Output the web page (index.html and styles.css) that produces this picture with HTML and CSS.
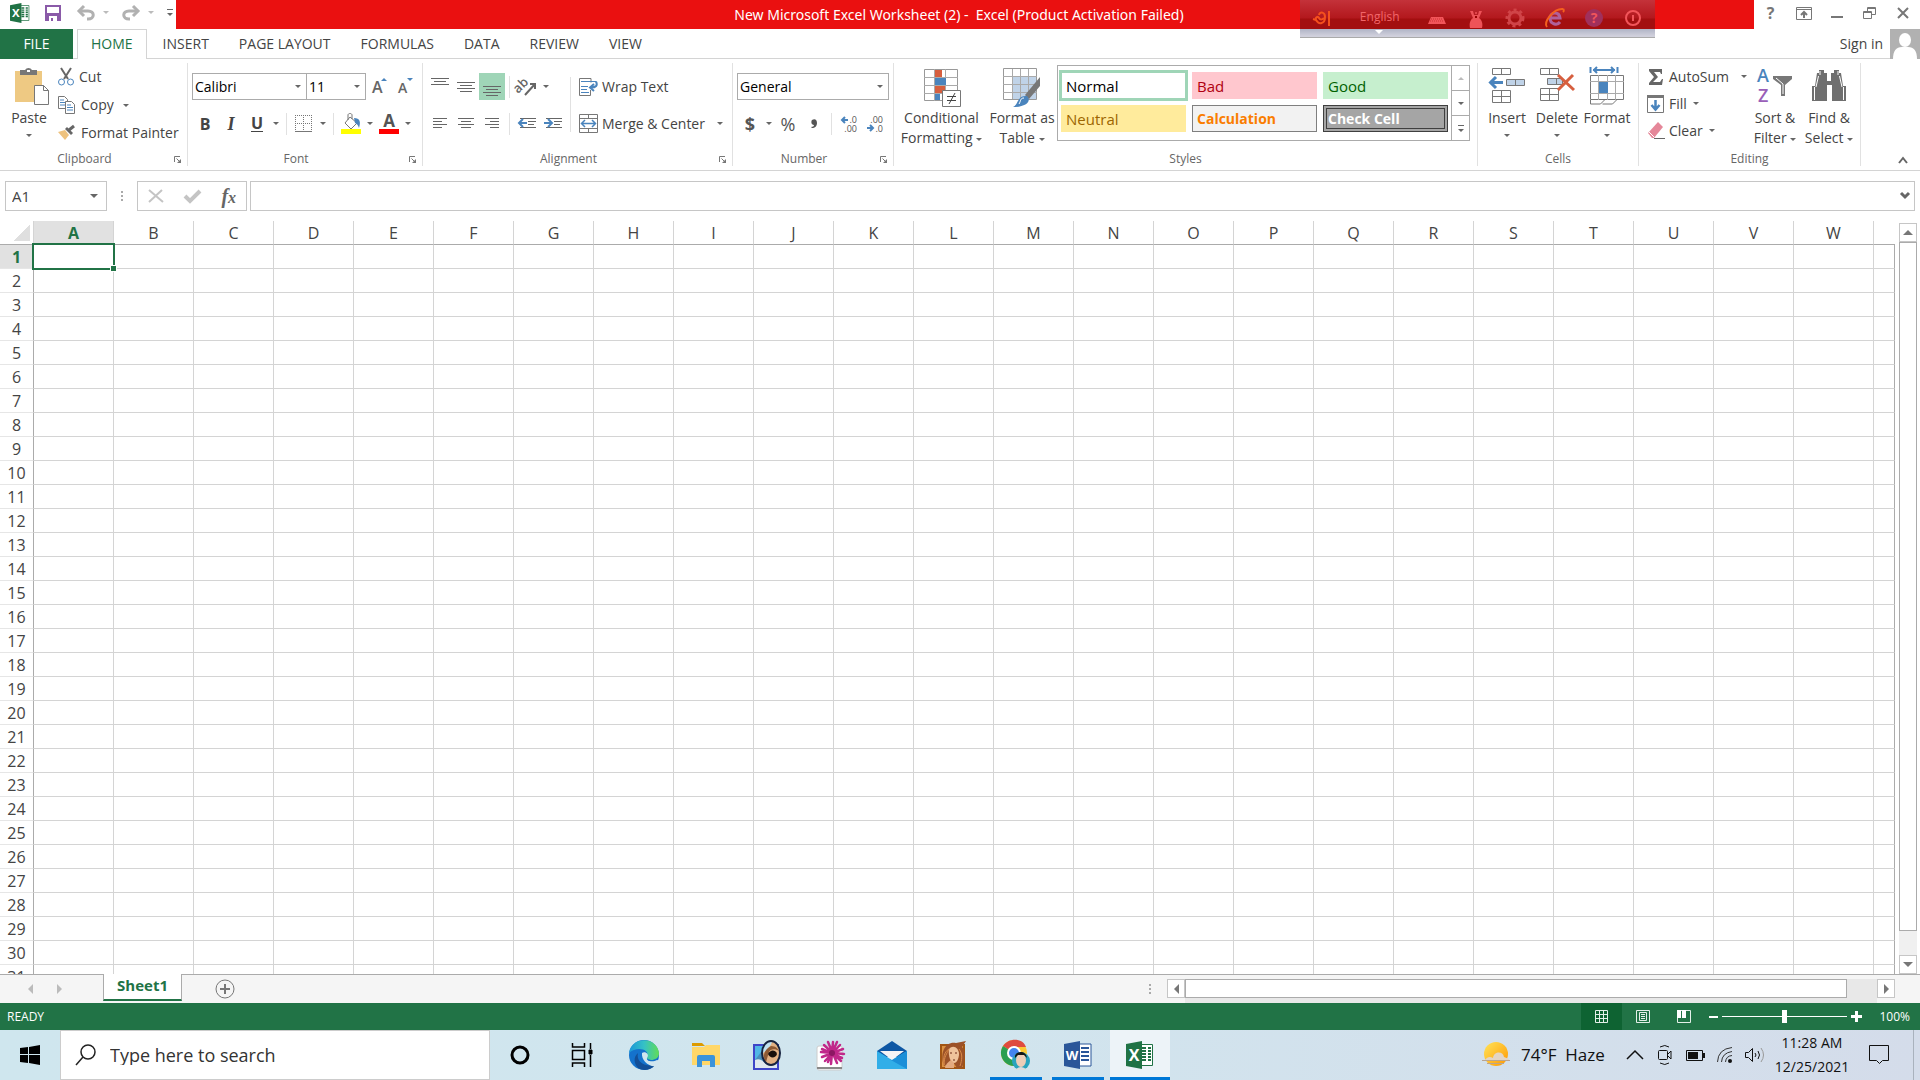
FILE: index.html
```html
<!DOCTYPE html>
<html lang="en">
<head>
  <meta charset="UTF-8" />
  <meta name="viewport" content="width=device-width, initial-scale=1.0" />
  <title>New Microsoft Excel Worksheet (2) - Excel</title>
  <link rel="stylesheet" href="styles.css">
</head>
<body>
  <header class="titlebar">
    <div class="quick-access">
      <svg class="excel-logo" width="20" height="20" viewBox="0 0 28 28"><use href="#excel"/></svg>
      <button class="qa-save" aria-label="Save"><svg width="16" height="16" viewBox="0 0 16 16"><path d="M0 0h16v16H0z" fill="#8a5aa8"/><path d="M2 2h12v6H2z" fill="#fff"/><path d="M4 11h8v5H4z" fill="#fff"/><path d="M6 13h2v3H6z" fill="#8a5aa8"/></svg></button>
      <button class="qa-undo" aria-label="Undo"><svg width="18" height="16" viewBox="0 0 18 16" fill="none" stroke="#b1b1b1" stroke-width="3"><path d="M2 6h9c7 0 7 8 0 8h-1"/><path d="M7 1L2 6l5 5"/></svg><i class="caret light"></i></button>
      <button class="qa-undo" aria-label="Redo"><svg width="18" height="16" viewBox="0 0 18 16" fill="none" stroke="#b1b1b1" stroke-width="3"><path d="M16 6H7C0 6 0 14 7 14h1"/><path d="M11 1l5 5-5 5"/></svg><i class="caret light"></i></button>
      <button class="qa-more" aria-label="Customize Quick Access Toolbar"><i class="caret bar"></i></button>
    </div>
    <h1 class="title">New Microsoft Excel Worksheet (2) -&nbsp; Excel (Product Activation Failed)</h1>
    <div class="window-buttons">
      <button aria-label="Help"><b>?</b></button>
      <button aria-label="Ribbon Display Options"><svg width="16" height="13" viewBox="0 0 16 13" fill="none" stroke="#777"><path d="M.5.5h15v12H.5zM.5 2.500h15" /><path d="M8 11V5M5 8l3-3 3 3" stroke-width="2"/></svg></button>
      <button aria-label="Minimize"><svg width="12" height="13"><path d="M0 9h12v2H0z" fill="#777"/></svg></button>
      <button aria-label="Restore"><svg width="13" height="12" viewBox="0 0 13 12" fill="none" stroke="#777"><path d="M.5 4.500h8v7h-8zM.5 5.500h8M4.500 4V.5h8v7H9M4.500 1.500h8"/></svg></button>
      <button aria-label="Close"><svg width="12" height="12" viewBox="0 0 12 12" stroke="#777" stroke-width="2"><path d="M1 1l10 10M11 1L1 11"/></svg></button>
    </div>
    <div class="language-bar">
      <svg width="20" height="20" viewBox="0 0 20 20" fill="none" stroke="#f4501e" stroke-width="2"><path d="M7 7c1-4 6-3 6 2 0 7-6 8-9 3-1-3 2-4 3-2s3 2 5 0M17 3v15M1 11l3 1"/></svg>
      <span class="language-name">English<i></i></span>
      <svg width="20" height="20" viewBox="0 0 20 20"><path d="M4 9h12l3 7H1z" fill="#f2555a"/><path d="M4 11h12M3 13h14" stroke="#c33" stroke-dasharray="1 1"/></svg>
      <svg width="20" height="20" viewBox="0 0 20 20" fill="#ee5358"><path d="M4 3h3l1 4h4l1-4h3l-3 7c3 2 4 6 3 10H4c-1-4 0-8 3-10z"/><circle cx="10" cy="5" r="1"/><path d="M9 8h2v2H9z" fill="#900"/></svg>
      <svg width="20" height="20" viewBox="0 0 20 20" fill="none" stroke="#d04448"><circle cx="10" cy="10" r="6" stroke-width="3"/><circle cx="10" cy="10" r="8" stroke-width="3" stroke-dasharray="3 3"/></svg>
      <svg width="22" height="20" viewBox="0 0 22 20" fill="none"><path d="M16 14c-3 4-10 2-10-4s9-7 10 0H7" stroke="#b0609a" stroke-width="3"/><path d="M3 19C-1 14 10 0 19 1c1 0 1 2 0 3" stroke="#f4601e" stroke-width="2"/></svg>
      <svg width="20" height="20" viewBox="0 0 20 20"><circle cx="10" cy="10" r="9" fill="#a0305c"/><text x="10" y="15" text-anchor="middle" font-size="14" font-weight="700" fill="#f0555a">?</text></svg>
      <svg width="20" height="20" viewBox="0 0 20 20" fill="none" stroke="#f2555a" stroke-width="2"><circle cx="10" cy="10" r="7"/><path d="M10 7v6"/></svg>
    </div>
  </header>

  <nav class="tabs">
    <button class="tab-file">FILE</button>
    <button class="tab active">HOME</button>
    <button class="tab">INSERT</button>
    <button class="tab">PAGE LAYOUT</button>
    <button class="tab">FORMULAS</button>
    <button class="tab">DATA</button>
    <button class="tab">REVIEW</button>
    <button class="tab">VIEW</button>
    <a class="sign-in" href="#">Sign in <svg width="30" height="30" viewBox="0 0 30 30"><path d="M0 0h30v30H0z" fill="#b1b1b1"/><ellipse cx="15" cy="11" rx="6" ry="7" fill="#fff"/><path d="M3 30c0-8 3-12 9-12h6c6 0 9 4 9 12z" fill="#fff"/></svg></a>
  </nav>

  <section class="ribbon">
    <div class="group clipboard">
      <div class="group-body">
        <button class="big paste">
          <svg width="36" height="40" viewBox="0 0 36 40"><path d="M1 4h27v31H1z" fill="#eec983"/><path d="M6 3h5a4 4 0 0 1 7 0h5v5H6z" fill="#777"/><path d="M13 3h3v2h-3z" fill="#fff"/><path d="M20.500 18.500h9l5 5v14h-14z" fill="#fff" stroke="#777"/><path d="M29.500 18.500v5h5" fill="none" stroke="#777"/></svg>
          <span>Paste</span><i class="caret"></i>
        </button>
        <div class="stack">
          <button class="small"><svg width="16" height="18" viewBox="0 0 16 18" fill="none"><path d="M3 0l7 11M13 0L6 11" stroke="#666" stroke-width="2"/><circle cx="3.500" cy="14" r="3" stroke="#4a84bd"/><circle cx="12.500" cy="14" r="3" stroke="#4a84bd"/></svg>Cut</button>
          <button class="small"><svg width="18" height="18" viewBox="0 0 18 18" fill="#fff" stroke="#777"><path d="M.5.500h6l3 3v9h-9z"/><path d="M2 4h4M2 6.500h5M2 9h5" stroke="#4a84bd"/><path d="M7.500 5.500h6l3 3v9h-9z"/><path d="M9 9h4M9 11.500h6M9 14h6" stroke="#4a84bd"/></svg>Copy<i class="caret"></i></button>
          <button class="small"><svg width="18" height="16" viewBox="0 0 18 16"><path d="M0 7l7-2 4 5-4 5z" fill="#eec27e"/><path d="M7 4l2-2 6 6-2 2z" fill="#666"/><path d="M11 5l5-4" stroke="#666" stroke-width="3"/></svg>Format Painter</button>
        </div>
      </div>
      <div class="group-label">Clipboard<svg class="launcher"><use href="#launcher"/></svg></div>
    </div>

    <div class="group font">
      <div class="group-body rows">
        <div class="row">
          <label class="combo font-name"><select aria-label="Font"><option>Calibri</option></select><i class="caret"></i></label>
          <label class="combo font-size"><select aria-label="Font Size"><option>11</option></select><i class="caret"></i></label>
          <button class="tool" aria-label="Increase Font Size"><svg width="15" height="18" viewBox="0 0 15 18"><text x="0" y="15" font-size="16" font-weight="600" fill="#666">A</text><path d="M9 3h6l-3-3z" fill="#4a84bd"/></svg></button>
          <button class="tool" aria-label="Decrease Font Size"><svg width="15" height="18" viewBox="0 0 15 18"><text x="0" y="15" font-size="14" font-weight="600" fill="#666">A</text><path d="M9 0h6l-3 3z" fill="#4a84bd"/></svg></button>
        </div>
        <div class="row">
          <button class="tool"><b>B</b></button>
          <button class="tool serif"><b>I</b></button>
          <button class="tool underline"><b>U</b></button>
          <button class="drop" aria-label="Underline options"><i class="caret"></i></button>
          <span class="sep"></span>
          <button class="tool" aria-label="Borders"><svg width="18" height="18" viewBox="0 0 18 18" fill="none" stroke="#777"><path d="M.5 0v16M8.500 0v16M16.500 0v16M0 .5h17M0 8.500h17" stroke-dasharray="1 1"/><path d="M0 16.500h17"/></svg></button>
          <button class="drop" aria-label="Border options"><i class="caret"></i></button>
          <span class="sep"></span>
          <button class="tool" aria-label="Fill Color"><svg width="20" height="20" viewBox="0 0 20 20"><path d="M9 3l7 6-6 6-6-6zM7 6V1c0-2 4-2 4 0v4" fill="#fff" stroke="#777"/><path d="M13 4c6 0 7 4 5 10c-1-3-2-4-4-5z" fill="#4a84bd"/><path d="M0 15h20v5H0z" fill="#ff0"/></svg></button>
          <button class="drop" aria-label="Fill color options"><i class="caret"></i></button>
          <button class="tool" aria-label="Font Color"><svg width="20" height="20" viewBox="0 0 20 20"><text x="10" y="13" text-anchor="middle" font-size="17" font-weight="700" fill="#555">A</text><path d="M0 15h20v5H0z" fill="red"/></svg></button>
          <button class="drop" aria-label="Font color options"><i class="caret"></i></button>
        </div>
      </div>
      <div class="group-label">Font<svg class="launcher"><use href="#launcher"/></svg></div>
    </div>

    <div class="group alignment">
      <div class="group-body">
        <div class="rows">
          <div class="row">
            <button class="tool" aria-label="Top Align"><svg width="18" height="26" stroke="#666"><path d="M0 4.500h18M3 7.500h12M0 10.500h18"/></svg></button>
            <button class="tool" aria-label="Middle Align"><svg width="18" height="26" stroke="#666"><path d="M0 8.500h18M3 11.500h12M0 14.500h18M3 17.500h12"/></svg></button>
            <button class="tool pressed" aria-label="Bottom Align"><svg width="18" height="26" stroke="#666"><path d="M0 12.500h18M3 15.500h12M0 18.500h18M3 21.500h12"/></svg></button>
            <span class="sep"></span>
            <button class="tool" aria-label="Orientation"><svg width="20" height="20" viewBox="0 0 20 20"><text transform="rotate(-45 6 12)" x="-1" y="12" font-size="13" font-weight="600" fill="#666">ab</text><path d="M8 18L18 7M13 7h5v5" fill="none" stroke="#666" stroke-width="2"/></svg></button>
            <button class="drop" aria-label="Orientation options"><i class="caret"></i></button>
          </div>
          <div class="row">
            <button class="tool" aria-label="Align Left"><svg width="14" height="11" stroke="#666"><path d="M0 .5h14M0 3.500h9M0 6.500h14M0 9.500h9"/></svg></button>
            <button class="tool" aria-label="Center"><svg width="16" height="11" stroke="#666"><path d="M0 .5h16M3 3.500h10M0 6.500h16M3 9.500h10"/></svg></button>
            <button class="tool" aria-label="Align Right"><svg width="14" height="11" stroke="#666"><path d="M0 .5h14M5 3.500h9M0 6.500h14M5 9.500h9"/></svg></button>
            <span class="sep"></span>
            <button class="tool" aria-label="Decrease Indent"><svg width="18" height="11" viewBox="0 0 18 11" stroke="#666" fill="none"><path d="M2 .5h16M10 3.500h8M10 6.500h6M2 9.500h16"/><path d="M9 5H1M5 1L1 5l4 4" stroke="#4a84bd" stroke-width="2"/></svg></button>
            <button class="tool" aria-label="Increase Indent"><svg width="18" height="11" viewBox="0 0 18 11" stroke="#666" fill="none"><path d="M2 .5h16M10 3.500h8M10 6.500h6M2 9.500h16"/><path d="M0 5h8M4 1l4 4-4 4" stroke="#4a84bd" stroke-width="2"/></svg></button>
          </div>
        </div>
        <div class="rows wrap-merge">
          <button class="small row"><svg width="19" height="18" viewBox="0 0 19 18" fill="none" stroke="#777"><path d="M12 .5H.5v17h11V12M12 .5v4"/><path d="M2 3.500h15M2 8.500h7M2 11.500h6M2 14.500h8" stroke="#4a84bd"/><path d="M17 3.500c2 4 0 6-5 6M15 6l-4 3.500L15 13" stroke="#4a84bd" stroke-width="2"/></svg>Wrap Text</button>
          <button class="small row"><svg width="19" height="19" viewBox="0 0 19 19" fill="none" stroke="#777"><path d="M.5.500h18v18H.5zM.5 4.500h18M.5 14.500h18M9.500 0v4M9.500 15v4"/><path d="M2 9.500h15M6 6L2.500 9.500 6 13M13 6l3.500 3.500L13 13" stroke="#4a84bd" stroke-width="1.500"/></svg>Merge &amp; Center<i class="caret"></i></button>
        </div>
      </div>
      <div class="group-label">Alignment<svg class="launcher"><use href="#launcher"/></svg></div>
    </div>

    <div class="group number">
      <div class="group-body rows">
        <div class="row">
          <label class="combo number-format"><select aria-label="Number Format"><option>General</option></select><i class="caret"></i></label>
        </div>
        <div class="row">
          <button class="tool sign"><b>$</b></button>
          <button class="drop" aria-label="Accounting options"><i class="caret"></i></button>
          <button class="tool sign">%</button>
          <button class="tool" aria-label="Comma Style"><svg width="6" height="10" viewBox="0 0 6 10"><path d="M1 1c3-2 5 0 5 3S4 9 1 9l-1-1c2 0 3-1 3-2C0 6 0 2 1 1z" fill="#555"/></svg></button>
          <span class="sep"></span>
          <button class="tool" aria-label="Increase Decimal"><svg width="16" height="18" viewBox="0 0 16 18"><text x="16" y="8" text-anchor="end" font-size="9" fill="#555">.0</text><text x="16" y="17" text-anchor="end" font-size="9" fill="#555">.00</text><path d="M7 5H1M4 2L1 5l3 3" fill="none" stroke="#4a84bd" stroke-width="2"/></svg></button>
          <button class="tool" aria-label="Decrease Decimal"><svg width="16" height="18" viewBox="0 0 16 18"><text x="16" y="8" text-anchor="end" font-size="9" fill="#555">.00</text><text x="16" y="17" text-anchor="end" font-size="9" fill="#555">.0</text><path d="M0 13h6M3 10l3 3-3 3" fill="none" stroke="#4a84bd" stroke-width="2"/></svg></button>
        </div>
      </div>
      <div class="group-label">Number<svg class="launcher"><use href="#launcher"/></svg></div>
    </div>

    <div class="group styles">
      <div class="group-body">
        <button class="big conditional">
          <svg width="38" height="40" viewBox="0 0 38 40"><path d="M1.500 2.500h33v31h-33z" fill="#fff" stroke="#999"/><path d="M1 10.500h34M1 18.500h34M1 26.500h34M11.500 2v32M22.500 2v32" stroke="#aaa"/><path d="M12 3h7v7h-7zM12 19h10v7H12z" fill="#d65f3f"/><path d="M12 11h11v7H12zM12 27h5v6h-5z" fill="#4a84bd"/><path d="M19.500 23.500h18v16h-18z" fill="#fff" stroke="#777"/><path d="M24 29.500h9M24 33.500h9M32 26l-6 11" stroke="#444"/></svg>
          <span>Conditional<br>Formatting <i class="caret"></i></span>
        </button>
        <button class="big format-table">
          <svg width="38" height="40" viewBox="0 0 38 40"><path d="M.5 1.500h33v31H.5z" fill="#fff" stroke="#999"/><path d="M9 9h24v23H9z" fill="#c0d3e8"/><path d="M0 9.500h34M0 17.500h34M0 25.500h34M9.500 2v30M17.500 2v30M25.500 2v30" stroke="#aaa"/><path d="M37 10v9L26 32l-4-4z" fill="#777"/><path d="M24 29c5 5-1 11-14 11 6-3 4-12 14-11z" fill="#4a84bd"/><path d="M21 31c-4 0-3 3-5 6" stroke="#fff" fill="none"/></svg>
          <span>Format as<br>Table <i class="caret"></i></span>
        </button>
        <div class="gallery">
          <div class="swatches">
            <button class="swatch normal">Normal</button>
            <button class="swatch bad">Bad</button>
            <button class="swatch good">Good</button>
            <button class="swatch neutral">Neutral</button>
            <button class="swatch calculation">Calculation</button>
            <button class="swatch check">Check Cell</button>
          </div>
          <div class="gallery-scroll">
            <button aria-label="Previous styles"><i class="caret up light"></i></button>
            <button aria-label="Next styles"><i class="caret"></i></button>
            <button aria-label="More styles"><i class="caret bar"></i></button>
          </div>
        </div>
      </div>
      <div class="group-label">Styles</div>
    </div>

    <div class="group cells">
      <div class="group-body">
        <button class="big">
          <svg width="36" height="40" viewBox="0 0 36 40" fill="#fff" stroke="#777"><path d="M3.500 1.500h18v6h-18zM12.500 1v7M3.500 23.500h18v12h-18zM12.500 23v13M3 29.500h19"/><path d="M17.500 12.500h18v6h-18zM26.500 12v7" fill="#c0d3e8"/><path d="M14 15.500H2M7 10l-5.500 5.500L7 21" fill="none" stroke="#4a84bd" stroke-width="3"/></svg>
          <span>Insert</span><i class="caret"></i>
        </button>
        <button class="big">
          <svg width="36" height="40" viewBox="0 0 36 40" fill="#fff" stroke="#777"><path d="M1.500 1.500h18v6h-18zM10.500 1v7M1.500 21.500h18v12h-18zM10.500 21v13M1 27.500h19"/><path d="M8.500 11.500h15v6h-15zM17.500 11v7" fill="#c0d3e8"/><path d="M19 8l16 15M34 8L19 23" stroke="#d65f3f" stroke-width="3"/></svg>
          <span>Delete</span><i class="caret"></i>
        </button>
        <button class="big">
          <svg width="36" height="40" viewBox="0 0 36 40" fill="#fff" stroke="#777"><path d="M1.500 8.500h33v24h-33z"/><path d="M1 14.500h34M1 26.500h34M9.500 8v25M18.500 8v25M26.500 8v25" stroke="#aaa"/><path d="M10 15h9v11h-9z" fill="#4a84bd" stroke="none"/><path d="M1.500 33v4h10l4-4M13.500 37h10l4-4" fill="none"/><path d="M1.500 0v6M28.500 0v6M4 3h22M8 0L5 3l3 3M22 0l3 3-3 3" fill="none" stroke="#4a84bd" stroke-width="2"/></svg>
          <span>Format</span><i class="caret"></i>
        </button>
      </div>
      <div class="group-label">Cells</div>
    </div>

    <div class="group editing">
      <div class="group-body">
        <div class="stack">
          <button class="small autosum"><svg width="18" height="18" viewBox="0 0 18 18"><path d="M2 1h13v5h-1l-1-2H7l4 5-5 5h7l2-3h1l-1 6H2v-2l5-6-5-6z" fill="#666"/></svg>AutoSum<i class="caret"></i></button>
          <button class="small"><svg width="18" height="18" viewBox="0 0 18 18"><path d="M.5.500h16v17H.5z" fill="#fff" stroke="#777"/><path d="M0 0h17v3H0z" fill="#777"/><path d="M8.500 5v9M4.500 10l4 4.500 4-4.500" fill="none" stroke="#4a84bd" stroke-width="2.500"/></svg>Fill<i class="caret"></i></button>
          <button class="small"><svg width="18" height="18" viewBox="0 0 18 18"><path d="M1 11L11 0l5 5-9 11H5z" fill="#e58799"/><path d="M2 10l5 5" stroke="#fff"/><path d="M7 16.500h11" stroke="#666"/></svg>Clear<i class="caret"></i></button>
        </div>
        <button class="big sort">
          <svg width="36" height="40" viewBox="0 0 36 40"><text x="0" y="15" font-size="18" font-weight="600" fill="#4a84bd">A</text><text x="1" y="35" font-size="18" font-weight="600" fill="#9a5fb8">Z</text><path d="M16 9h19v3l-7 6v11h-4V18l-8-6z" fill="#777"/><path d="M19 11l7 6v10" stroke="#fff" fill="none"/></svg>
          <span>Sort &amp;<br>Filter <i class="caret"></i></span>
        </button>
        <button class="big find">
          <svg width="36" height="40" viewBox="0 0 36 40"><path d="M8 3h5v3h3v8h4V6h3V3h5v3h2l2 13h3v15H21V18h-5v16H1V19h3L6 6h2z" fill="#6f6f6f"/><path d="M9 4v4M27 4v4M3.500 20v13M32.500 20v13M7.500 9L5 20M28.500 9L31 20" stroke="#fff"/></svg>
          <span>Find &amp;<br>Select <i class="caret"></i></span>
        </button>
      </div>
      <div class="group-label">Editing</div>
    </div>
    <button class="collapse" aria-label="Collapse the Ribbon"><svg width="10" height="8" fill="none" stroke="#666" stroke-width="2"><path d="M1 7l4-5 4 5"/></svg></button>
  </section>

  <section class="formula-bar">
    <label class="name-box"><input type="text" value="A1" aria-label="Name Box"><i class="caret"></i></label>
    <span class="dots"></span>
    <div class="formula-buttons">
      <button aria-label="Cancel"><svg width="16" height="14" fill="none" stroke="#c4c4c4" stroke-width="2"><path d="M1 1l14 12M14 1L1 13"/></svg></button>
      <button aria-label="Enter"><svg width="18" height="14" fill="none" stroke="#c4c4c4" stroke-width="4"><path d="M1 7l5 5L16 2"/></svg></button>
      <button class="fx" aria-label="Insert Function"><i>f</i><i class="x">x</i></button>
    </div>
    <label class="formula-input"><input type="text" aria-label="Formula"><svg width="10" height="8" fill="none" stroke="#666" stroke-width="3"><path d="M1 1l4 4 4-4"/></svg></label>
  </section>

  <main class="sheet">
    <div class="grid">
      <table id="cells"></table>
    </div>
    <div class="v-scroll">
      <button aria-label="Scroll up"><i class="arrow up"></i></button>
      <div class="v-thumb"></div>
      <button aria-label="Scroll down"><i class="arrow down"></i></button>
    </div>
  </main>

  <div class="sheet-tabs">
    <div class="sheet-nav">
      <button aria-label="Previous sheet"><i class="arrow left light"></i></button>
      <button aria-label="Next sheet"><i class="arrow right light"></i></button>
    </div>
    <button class="sheet-tab">Sheet1</button>
    <button class="add-sheet" aria-label="New sheet"><svg width="20" height="20" fill="none" stroke="#777"><circle cx="10" cy="10" r="9"/><path d="M5 10h10M10 5v10" stroke-width="2"/></svg></button>
    <div class="h-scroll">
      <span class="dots"></span>
      <button aria-label="Scroll left"><i class="arrow left"></i></button>
      <div class="h-track"><div class="h-thumb"></div></div>
      <button aria-label="Scroll right"><i class="arrow right"></i></button>
    </div>
  </div>

  <footer class="status">
    <span>READY</span>
    <div class="status-tools">
      <button class="view on" aria-label="Normal view"><svg width="13" height="13" fill="none" stroke="#e4f0e9"><path d="M.5.500h12v12H.5zM4.500 0v13M8.500 0v13M0 4.500h13M0 8.500h13"/></svg></button>
      <button class="view" aria-label="Page Layout view"><svg width="14" height="13" fill="none" stroke="#e4f0e9"><path d="M.5.500h13v12H.5zM3.500 2.500h7v8h-7zM5 4.500h4M5 6.500h4M5 8.500h4"/></svg></button>
      <button class="view" aria-label="Page Break Preview"><svg width="14" height="13"><path d="M.5.500h13v12H.5z" fill="none" stroke="#e4f0e9"/><path d="M0 0h4v8H0zM5 0h4v8H5z" fill="#fff"/></svg></button>
      <button class="zoom-step" aria-label="Zoom out"><svg width="9" height="10"><path d="M0 4h9v2H0z" fill="#fff"/></svg></button>
      <input class="zoom" type="range" min="0" max="200" value="100" aria-label="Zoom">
      <button class="zoom-step" aria-label="Zoom in"><svg width="11" height="11"><path d="M0 4h11v3H0zM4 0h3v11H4z" fill="#fff"/></svg></button>
      <span class="zoom-value">100%</span>
    </div>
  </footer>

  <div class="taskbar">
    <button class="start" aria-label="Start"><svg width="20" height="20" viewBox="0 0 20 20"><path d="M0 3l8-1v7H0zM9 2l11-2v9H9zM0 10h8v8l-8-1zM9 10h11v10L9 18z"/></svg></button>
    <label class="search"><svg width="21" height="22" viewBox="0 0 21 22" fill="none" stroke="#222" stroke-width="1.500"><circle cx="13" cy="8" r="7"/><path d="M8 13l-7 8"/></svg><input type="text" placeholder="Type here to search" aria-label="Search"></label>
    <div class="apps">
      <button aria-label="Cortana"><svg width="22" height="22"><circle cx="11" cy="11" r="8" fill="none" stroke="#000" stroke-width="3"/></svg></button>
      <button aria-label="Task View"><svg width="22" height="24" viewBox="0 0 22 24" fill="none" stroke="#000"><path d="M1.500 0v4h12V0M1.500 24v-4h12v4M1.500 7.500h12v9h-12zM19.500 0v6M19.500 12v12" stroke-width="1.500"/><path d="M18 7h3v4h-3z" fill="#000"/></svg></button>
      <button aria-label="Edge"><svg width="30" height="30" viewBox="0 0 30 30"><defs><linearGradient id="edge-top" x1="0" x2="1"><stop offset="0" stop-color="#1b96d8"/><stop offset=".5" stop-color="#35c1c6"/><stop offset="1" stop-color="#62dd56"/></linearGradient></defs><circle cx="15" cy="15" r="15" fill="#1472cc"/><path d="M0 13C2-4 28-4 30 13c0 5-4 7-8 7-4-1-5-2-4-4 3-7-11-10-18-3z" fill="url(#edge-top)"/><path d="M9 13c-2 8 5 14 17 12-4 6-13 6-17 3-4-4-5-11 0-15z" fill="#134f97"/><path d="M13 13c3-2 8 1 5 5-1 4 7 4 10 2l4 1-4 5c-8 2-16-6-15-13z" fill="#d0e5ee"/></svg></button>
      <button aria-label="File Explorer"><svg width="28" height="26" viewBox="0 0 28 26"><path d="M0 1h10l3 3H0z" fill="#dd9b00"/><path d="M0 5h12l2-2h14v20H0z" fill="#ffd768"/><path d="M5 25V15q0-2 2-2h14q2 0 2 2v10h-5v-6h-8v6z" fill="#3b93da"/></svg></button>
      <button aria-label="Picture viewer"><svg width="30" height="30" viewBox="0 0 30 30"><path d="M1 5h24v24H1z" fill="#51b7e5" stroke="#3e45c8" stroke-width="2"/><path d="M2 20l6-8 6 7v9H2z" fill="#4b8fbc"/><path d="M2 20c4-2 7 0 10 3s8 2 12 1v4H2z" fill="#dfe9ee"/><ellipse cx="18" cy="13" rx="9" ry="12" fill="#e2b183"/><path d="M10 13C8 3 15-1 19 2c-1 4-4 7-9 11z" fill="#bfe0ee"/><path d="M13 22c-4-6-2-12 5-16 5 0 7 3 8 5-4-3-9-2-10 1z" fill="#8e5a34"/><path d="M15 14c2-4 7-5 9 0-1 4-7 5-9 0z" fill="#180e0a"/><ellipse cx="18" cy="13" rx="9" ry="12" fill="none" stroke="#16233f" stroke-width="2"/></svg></button>
      <button aria-label="Flower"><svg width="30" height="30" viewBox="0 0 30 30"><rect x="2" y="6" width="25" height="24" rx="2" fill="#fff" stroke="#ccc"/><path d="M2 28h25" stroke="#888" stroke-width="2"/><g stroke="#c0288a" stroke-width="2.500" stroke-linecap="round"><path d="M18 2l-2 22M6 12l23 2M9 5l17 16M25 5L10 21M13 2l9 21M22 2l-9 20M7 9l20 9M28 9L7 17"/></g><circle cx="17" cy="13" r="3" fill="#8c1763"/></svg></button>
      <button aria-label="Mail"><svg width="30" height="28" viewBox="0 0 30 28"><path d="M0 10L15 0l15 10v6H0z" fill="#0d57a4"/><path d="M0 10l15 9L30 10v18H0z" fill="#31aee8"/><path d="M3 10h24l-12 9z" fill="#f4f4f6"/><path d="M12 18l18 10V10L15 19z" fill="#1b8fd8"/></svg></button>
      <button aria-label="Portrait"><svg width="30" height="30" viewBox="0 0 30 30"><path d="M2 5h23v23H2z" fill="#dc9343" stroke="#a15513" stroke-width="2"/><path d="M5 26C0 12 7 1 17 3l10-2-4 6c4 4 3 12 0 21h-5l-4-6z" fill="#9c5228"/><path d="M10 9c4-5 10-1 10 5 0 4-2 9-5 9s-6-6-5-14z" fill="#efc39b"/><path d="M5 25c0-9 3-11 5-16-5 3-6 9-5 16zM20 9c4 5 3 11 1 17" fill="none" stroke="#d98a48"/><path d="M11 13h2M16 13h2M14 20h2" stroke="#6d2b18"/><path d="M12 20l3 3v5H6q1-5 6-8z" fill="#e3aa80"/></svg></button>
      <button class="running" aria-label="Chrome"><svg width="32" height="32" viewBox="0 0 32 32"><circle cx="14" cy="14" r="13" fill="#fcc934"/><path d="M14 14L3 7C9-2 23-1 26 8H14z" fill="#df4b3f"/><path d="M14 14L3 7c-6 10 2 20 11 20l5-10z" fill="#2a9f52"/><circle cx="14" cy="14" r="6" fill="#4384ee" stroke="#fff" stroke-width="2"/><circle cx="21" cy="22" r="9" fill="#2aa3bd"/><ellipse cx="21" cy="21" rx="5" ry="7" fill="#edcdb7"/><path d="M15 19c-1-7 11-9 12 0l-3-3h-6z" fill="#151515"/><path d="M15 31q6-6 12 0z" fill="#ddd"/></svg></button>
      <button class="running" aria-label="Word"><svg width="28" height="28" viewBox="0 0 28 28"><path d="M14 3h13v22H14z" fill="#fff" stroke="#2a5699"/><path d="M17 7h8M17 11h8M17 15h8M17 19h8" stroke="#2a5699" stroke-width="2"/><path d="M0 3l16-3v28L0 25z" fill="#2a5699"/><text x="8" y="19" text-anchor="middle" font-size="13" font-weight="700" fill="#fff">W</text></svg></button>
      <button class="running current" aria-label="Excel"><svg width="28" height="28" viewBox="0 0 28 28"><g id="excel"><path d="M14 3.500h12.500v21H14z" fill="#fff" stroke="#207245"/><path d="M16 7h4M16 10h4M16 13h4M16 16h4M16 19h4M22 7h3M22 10h3M22 13h3M22 16h3M22 19h3" stroke="#207245" stroke-width="2"/><path d="M0 3l16-3v28L0 25z" fill="#207245"/><text x="8" y="20" text-anchor="middle" font-size="16" font-weight="700" fill="#fff">X</text></g></svg></button>
    </div>
    <div class="tray">
      <button class="weather"><svg width="28" height="26" viewBox="0 0 28 26"><defs><linearGradient id="sun" x1="0" x2="1" y2="1"><stop offset="0" stop-color="#ffe45a"/><stop offset="1" stop-color="#ff9800"/></linearGradient></defs><circle cx="14" cy="12" r="12" fill="url(#sun)"/><path d="M3 18c2-3 5-4 8-2 1-7 10-7 11-1l5 2v2H3z" fill="#e3d5c5"/><path d="M0 18.500h28M5 21.500h17" stroke="#bba58d"/></svg>74°F&nbsp; Haze</button>
      <button aria-label="Show hidden icons"><svg width="16" height="10" fill="none" stroke="#111" stroke-width="1.500"><path d="M0 9l8-8 8 8"/></svg></button>
      <button aria-label="Meet Now"><svg width="16" height="20" fill="none" stroke="#111"><rect x="1.500" y="5.500" width="9" height="9" rx="1"/><path d="M11 9l3-3v8l-3-3M3 2q5-3 9 0M3 18q5 3 9 0"/></svg></button>
      <button aria-label="Battery"><svg width="19" height="11"><path d="M.5.500h16v10H.5z" fill="none" stroke="#111"/><path d="M2 2h10v7H2zM17 3h2v5h-2z" fill="#111"/></svg></button>
      <button aria-label="Network"><svg width="16" height="16" fill="none" stroke="#333"><path d="M.5 15Q1 2 15 .5M4.500 15Q5 6 15 4.500M8.500 15Q9 9 15 8.500"/><circle cx="13" cy="14" r="2" fill="#111" stroke="none"/></svg></button>
      <button aria-label="Volume"><svg width="20" height="18" fill="none" stroke="#111"><path d="M.5 6.500h3l4-4v13l-4-4h-3zM10 7q2 2 0 4M13 5q3 4 0 8"/><path d="M16 2q5 7 0 14" stroke="#999"/></svg></button>
      <button class="clock">11:28 AM<br>12/25/2021</button>
      <button class="notifications" aria-label="Notifications"><svg width="20" height="20" fill="none" stroke="#111"><path d="M.5.500h19v15h-6l-3 3-3-3h-7z"/></svg></button>
      <span class="show-desktop"></span>
    </div>
  </div>

  <svg class="defs"><symbol id="launcher" viewBox="0 0 7 7"><path d="M.5 6V.5H6M2.500 2.500l3 3" fill="none" stroke="#777"/><path d="M7 3v4H3z" fill="#777"/></symbol></svg>
  <script src="script.js"></script>
</body>
</html>
```

FILE: styles.css
```css
*,*::before,*::after{box-sizing:border-box;margin:0;padding:0;}
body{
  height:100vh;
  display:flex;flex-direction:column;
  font-family:"Open Sans","Noto Sans",sans-serif;
  font-size:14px;
  line-height:20px;
  background:#fff;
  color:#444;
  overflow:hidden;
}
button,input,select{font:inherit;color:inherit;border:0;background:none;outline:none;}
button{display:flex;align-items:center;justify-content:center;flex-shrink:0;white-space:nowrap;}
svg{display:block;flex-shrink:0;overflow:visible;}
.defs{display:none;}

/* small triangles */
.caret{
  display:inline-block;width:0;height:0;flex-shrink:0;
  border:3px solid transparent;border-top-color:#666;border-bottom:0;
}
.caret.up{border-top:0;border-bottom:3px solid #bbb;}
.caret.light{border-top-color:#bbb;}
.caret.bar{position:relative;margin-top:4px;}
.caret.bar::before{content:"";position:absolute;left:-3px;top:-7px;width:6px;height:1px;background:#666;}
.arrow{width:0;height:0;border:5px solid transparent;}
.arrow.up{border-top:0;border-bottom-color:#777;}
.arrow.down{border-bottom:0;border-top-color:#777;}
.arrow.left{border-left:0;border-right-color:#777;}
.arrow.right{border-right:0;border-left-color:#777;}
.arrow.left.light{border-right-color:#bbb;}
.arrow.right.light{border-left-color:#bbb;}
.dots{width:2px;height:10px;background:repeating-linear-gradient(#aaa 0 2px,transparent 2px 4px);}

/* title bar */
.titlebar{position:relative;display:flex;height:29px;flex-shrink:0;}
.quick-access{width:176px;padding:0 4px 4px 10px;display:flex;align-items:center;}
.qa-save{margin:0 16px 0 15px;}
.qa-undo{gap:8px;width:45px;justify-content:flex-start;}
.qa-more{width:6px;}
.title{
  flex:1;
  padding-right:12px;
  background:#ea1010;
  color:#fff;
  font-family:"Noto Sans",sans-serif;
  font-size:14px;font-weight:400;line-height:29px;text-align:center;
  white-space:nowrap;
}
.window-buttons{width:166px;padding-bottom:3px;display:flex;color:#777;}
.window-buttons button{width:33px;font-size:16px;}
.language-bar{
  position:absolute;right:265px;top:0;z-index:2;
  width:355px;height:38px;
  padding:8px 12px;
  display:flex;justify-content:space-between;
  background:linear-gradient(#c4323a,#b3181d 18px,#a30f10 19px,#a30f10 29px,#b0b4c6 29px,#d0d0dc 36px);
  border-bottom:1px solid #aaa;
}
.language-name{
  position:relative;
  width:58px;
  font-size:12px;line-height:18px;color:#f2666a;text-align:center;
}
.language-name i{position:absolute;left:24px;top:22px;border:4px solid transparent;border-top-color:#fff;border-bottom:0;}

/* ribbon tabs */
.tabs{display:flex;gap:2px;height:30px;flex-shrink:0;border-bottom:1px solid #d4d4d4;}
.tab-file{width:73px;height:30px;margin-right:2px;background:#217346;color:#fff;}
.tab{height:30px;padding:0 14px 1px;}
.tab.active{
  padding:0 13px 1px;
  background:#fff;color:#217346;
  border:1px solid #d4d4d4;border-bottom:0;
}
.sign-in{
  margin-left:auto;
  display:flex;align-items:center;gap:7px;
  color:#444;text-decoration:none;
}

/* ribbon */
.ribbon{
  display:flex;
  height:112px;flex-shrink:0;
  padding:4px 0;
  border-bottom:1px solid #d4d4d4;
}
.group{display:flex;flex-direction:column;flex-shrink:0;border-right:1px solid #e1e1e1;}
.group-body{flex:1;min-height:0;display:flex;}
.group-label{
  position:relative;
  height:14px;
  font-size:12px;line-height:14px;text-align:center;color:#666;
}
.clipboard .group-label,.font .group-label,.alignment .group-label,.number .group-label{padding-right:18px;}
.launcher{position:absolute;right:6px;top:4px;width:7px;height:7px;}
.clipboard{width:188px;}
.font{width:235px;}
.alignment{width:310px;}
.number{width:161px;}
.styles{width:584px;}
.cells{width:161px;}
.editing{width:222px;}

.rows{flex-direction:column;padding:10px 0 0 4px;}
.row{display:flex;align-items:center;height:27px;flex-shrink:0;}
.row + .row{margin-top:10px;}
.tool{width:26px;height:27px;font-size:16px;}
.tool.pressed{background:#9fd5b7;}
.tool.serif{font-family:"Liberation Serif",serif;font-style:italic;font-size:18px;}
.underline b{border-bottom:1px solid #444;line-height:16px;}
.tool.sign{font-size:18px;color:#555;}
.drop{width:12px;height:27px;}
.sep{width:1px;height:22px;margin:0 4px;background:#e1e1e1;}

.combo{position:relative;display:flex;height:27px;border:1px solid #ababab;color:#000;}
.combo select{width:100%;padding-left:2px;appearance:none;}
.combo .caret{position:absolute;right:5px;top:11px;}
.font-name{width:115px;}
.font-size{width:59px;border-left:0;}
.number-format{width:152px;}

.small{gap:6px;justify-content:flex-start;}
.small .caret{margin-left:4px;}
.stack{display:flex;flex-direction:column;}
.stack .small{height:28px;gap:5px;}
.big{
  flex-direction:column;justify-content:flex-start;
  padding-top:4px;
  text-align:center;
}
.big > svg{margin-bottom:1px;}
.big > .caret{margin-top:6px;}
.big .caret{vertical-align:middle;}
.paste{width:58px;}
.paste > svg{margin-left:6px;}
.alignment .rows{display:flex;}
.wrap-merge{position:relative;margin-left:4px;padding-left:9px;}
.wrap-merge::before{content:"";position:absolute;left:0;top:14px;width:1px;height:55px;background:#e1e1e1;}
.wrap-merge .small{gap:4px;}
.wrap-merge .small .caret{margin-left:8px;}
.conditional{width:95px;}
.format-table{width:66px;margin-right:2px;}

.gallery{
  flex:1;
  display:flex;
  height:76px;margin:2px 7px 0 0;
  border:1px solid #ababab;
}
.swatches{
  flex:1;
  display:grid;grid-template-columns:repeat(3,1fr);gap:6px;
  align-content:start;
  padding:6px 3px;
}
.swatch{height:27px;justify-content:flex-start;padding-left:5px;font-size:15px;}
.normal{color:#000;outline:3px solid #9fd5b7;outline-offset:-1px;}
.bad{background:#ffc7ce;color:#b00010;}
.good{background:#c6efce;color:#006100;}
.neutral{background:#ffeb9c;color:#9c6500;}
.calculation{background:#f2f2f2;color:#fa7d00;border:1px solid #7f7f7f;padding-left:4px;font-weight:700;}
.check{background:#a5a5a5;color:#fff;border:4px double #3f3f3f;padding-left:1px;font-weight:700;}
.calculation,.check{font-size:14px;}
.gallery-scroll{width:18px;display:flex;flex-direction:column;border-left:1px solid #ababab;}
.gallery-scroll button{flex:1;}
.gallery-scroll button + button{border-top:1px solid #ababab;}

.cells .group-body{padding-left:4px;}
.cells .big{width:50px;}
.editing .group-body{padding-left:8px;}
.editing .stack{width:100px;}
.editing .stack .small{height:27px;gap:4px;}
.editing .small .caret{margin-left:2px;}
.editing .autosum .caret{margin-left:auto;}
.sort{width:56px;}
.find{width:52px;}
.collapse{align-self:flex-end;width:12px;height:12px;margin:0 11px 0 auto;}

/* formula bar */
.formula-bar{
  display:flex;align-items:center;
  height:50px;flex-shrink:0;
  padding:0 5px;
}
.name-box,.formula-buttons,.formula-input{display:flex;align-items:center;height:30px;border:1px solid #c6c6c6;}
.name-box{width:102px;padding:0 8px 0 6px;font-size:15px;}
.name-box input{flex:1;min-width:0;}
.name-box .caret{border-width:4px 4px 0;}
.formula-bar .dots{margin:0 14px;}
.formula-buttons{width:110px;justify-content:space-around;}
.fx{font-family:"Liberation Serif",serif;font-size:20px;font-weight:700;color:#666;}
.fx .x{font-size:16px;padding-top:3px;}
.formula-input{flex:1;margin-left:3px;padding:0 4px;}
.formula-input input{flex:1;}

/* worksheet */
.sheet{flex:1;min-height:0;display:flex;}
.grid{flex:1;overflow:hidden;}
table{width:100%;table-layout:fixed;border-collapse:separate;border-spacing:0;}
.col-head{width:34px;}
.col-cell{width:80px;}
th{height:24px;font-size:16px;font-weight:400;line-height:22px;}
thead th{
  border-bottom:1px solid #ababab;
  border-right:1px solid #d4d4d4;
}
thead th:last-child{border-right:0;}
tbody th{border-right:1px solid #ababab;border-bottom:1px solid #e6e6e6;}
thead th:first-child{
  background:linear-gradient(135deg,transparent 50%,#dfdfdf 50%) right 3px bottom 3px/16px 16px no-repeat;
}
th.on{background:#e1e1e1;color:#217346;font-weight:700;}
td{border-right:1px solid #d4d4d4;border-bottom:1px solid #d4d4d4;}
td:last-child{border-right-color:#ababab;}
td.selected{position:relative;z-index:1;}
td.selected::before{content:"";position:absolute;inset:-2px;border:2px solid #217346;}
td.selected::after{
  content:"";position:absolute;right:-4px;bottom:-4px;
  width:7px;height:7px;
  background:#217346;border:1px solid #fff;
}
.v-scroll{
  width:25px;
  display:flex;flex-direction:column;
  padding:2px 3px 0 4px;
}
.v-scroll button,.h-scroll button{width:18px;height:19px;background:#fff;border:1px solid #c6c6c6;}
.v-thumb{flex:1;margin-bottom:24px;border:1px solid #ababab;box-shadow:0 24px #f0f0f0;background:#fff;}

.sheet-tabs{
  display:flex;
  height:29px;flex-shrink:0;
  background:#f5f5f5;
  border-top:1px solid #ababab;
}
.sheet-nav{width:103px;display:flex;padding-left:16px;}
.sheet-nav button{width:29px;height:28px;}
.sheet-tab{
  width:79px;height:27px;margin-top:-1px;padding-bottom:4px;
  background:#fff;color:#217346;
  border:1px solid #ababab;border-top:0;border-bottom:2px solid #217346;
  font-weight:700;font-size:15px;
}
.add-sheet{width:86px;}
.h-scroll{width:746px;margin:4px 25px 0 auto;display:flex;}
.h-scroll .dots{margin:5px 16px 0 0;}
.h-track{flex:1;padding-right:30px;background:#e8e8e8;}
.h-thumb{height:19px;background:#fff;border:1px solid #ababab;}

/* status bar */
.status{
  display:flex;align-items:center;
  height:27px;flex-shrink:0;
  padding:0 10px 0 7px;
  background:#217346;color:#fff;
  font-size:12px;
}
.status-tools{margin-left:auto;display:flex;align-items:center;}
.view{width:41px;height:27px;}
.view.on{background:#0e6332;}
.zoom-step{width:18px;height:27px;}
.zoom{appearance:none;width:125px;height:13px;background:linear-gradient(#fff,#fff) center/100% 1px no-repeat;}
.zoom::-webkit-slider-thumb{appearance:none;width:5px;height:13px;background:#fff;}
.zoom-value{margin-left:14px;}

/* taskbar */
.taskbar{
  display:flex;
  height:50px;flex-shrink:0;
  background:linear-gradient(90deg,#cfe6ee,#d1e5ee 50%,#d4dcea);
  color:#111;
}
.start{width:60px;}
.search{
  width:430px;
  display:flex;align-items:center;gap:14px;
  padding:0 14px;
  background:#fff;border:1px solid #ccc;
}
.search input{flex:1;font-size:18px;}
.search input::placeholder{color:#333;opacity:1;}
.apps{display:flex;margin-left:-1px;}
.apps button{width:62px;height:50px;border:0 solid transparent;border-width:0 5px;}
.apps .running{background:linear-gradient(#0078d7,#0078d7) bottom/100% 3px no-repeat padding-box;}
.apps .current{width:60px;border-width:0;margin-left:1px;background-color:#edf3f8;}
.tray{margin-left:auto;display:flex;align-items:center;}
.tray button{width:30px;height:50px;}
.tray .weather{width:138px;justify-content:flex-start;gap:11px;font-size:17px;}
.tray .clock{width:84px;line-height:24px;}
.tray .notifications{width:49px;}
.show-desktop{width:1px;height:50px;margin:0 6px 0 10px;background:#a9b2bd;}
```

FILE: script.js
```js
const table = document.getElementById("cells");
const letters = "ABCDEFGHIJKLMNOPQRSTUVW".split("");
const rowCount = 31;

let html = '<colgroup><col class="col-head">';
letters.forEach(() => html += '<col class="col-cell">');
html += '<col></colgroup><thead><tr><th></th>';
letters.forEach((letter, i) => {
  html += `<th class="${i === 0 ? "on" : ""}">${letter}</th>`;
});
html += "<th></th></tr></thead><tbody>";

for (let row = 1; row <= rowCount; row++) {
  html += `<tr><th class="${row === 1 ? "on" : ""}">${row}</th>`;
  for (let col = 0; col <= letters.length; col++) {
    html += row === 1 && col === 0 ? '<td class="selected"></td>' : "<td></td>";
  }
  html += "</tr>";
}

table.innerHTML = html + "</tbody>";
```
